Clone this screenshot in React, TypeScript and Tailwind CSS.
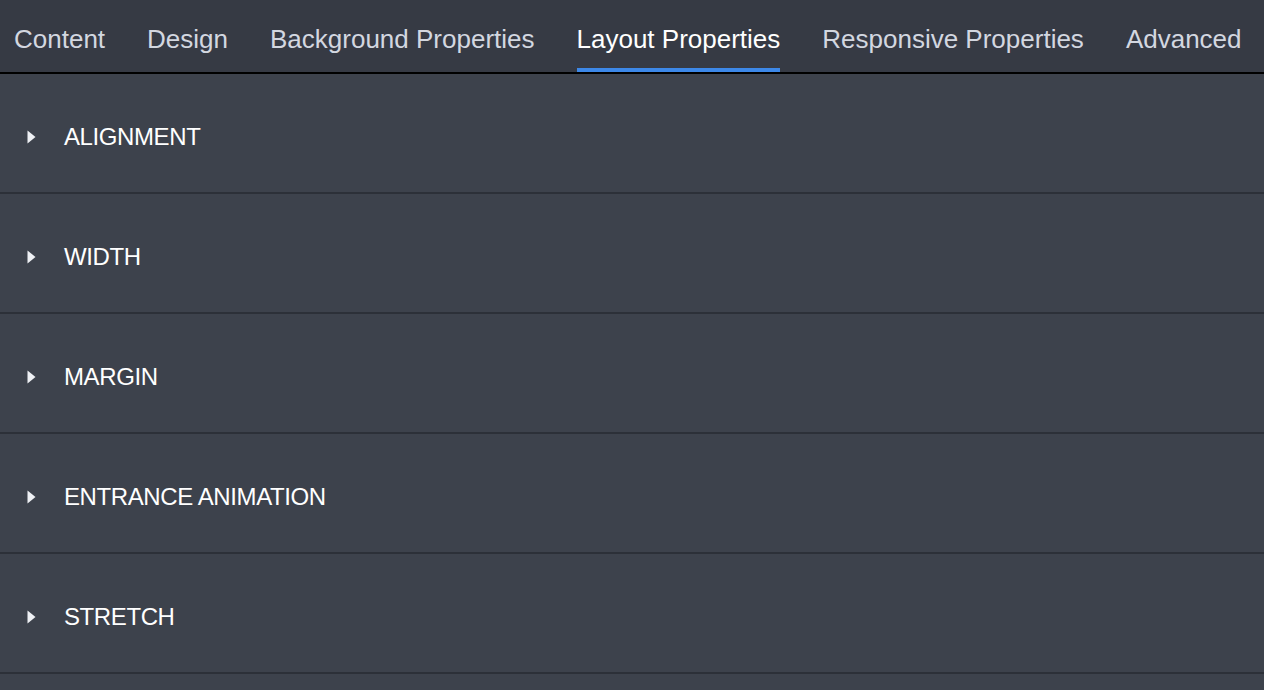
import React, { useState } from 'react';

const TABS = ['Content', 'Design', 'Background Properties', 'Layout Properties', 'Responsive Properties', 'Advanced'];
const SECTIONS = ['ALIGNMENT', 'WIDTH', 'MARGIN', 'ENTRANCE ANIMATION', 'STRETCH'];

const Caret: React.FC = () => (
  <svg width="9" height="14" viewBox="0 0 9 14" className="shrink-0">
    <polygon points="0.5,0.5 8.5,7 0.5,13.5" fill="#eef0f4" />
  </svg>
);

const Section: React.FC<{ title: string }> = ({ title }) => (
  <div className="h-[120px] flex items-center pt-2 pl-[27px] border-b-2 border-[#2c3038] cursor-pointer">
    <Caret />
    <span className="ml-[28px] text-[24px] tracking-[-0.4px] text-white leading-none">{title}</span>
  </div>
);

export default function App() {
  const [active, setActive] = useState('Layout Properties');

  return (
    <div className="w-[1264px] h-[690px] overflow-hidden bg-[#3d424c] font-['Liberation_Sans',Arial,sans-serif]">
      <div className="h-[74px] bg-[#363a44] border-b-2 border-black flex pl-[14px] gap-[42px]">
        {TABS.map(t => (
          <button
            key={t}
            onClick={() => setActive(t)}
            className={
              'h-full flex items-center pt-[9px] border-b-4 whitespace-nowrap text-[26px] leading-none ' +
              (t === active ? 'border-[#3d88e8] text-white' : 'border-transparent text-[#d3d7e0]')
            }
          >
            {t}
          </button>
        ))}
      </div>
      <div>
        {SECTIONS.map(s => (
          <Section key={s} title={s} />
        ))}
      </div>
    </div>
  );
}
